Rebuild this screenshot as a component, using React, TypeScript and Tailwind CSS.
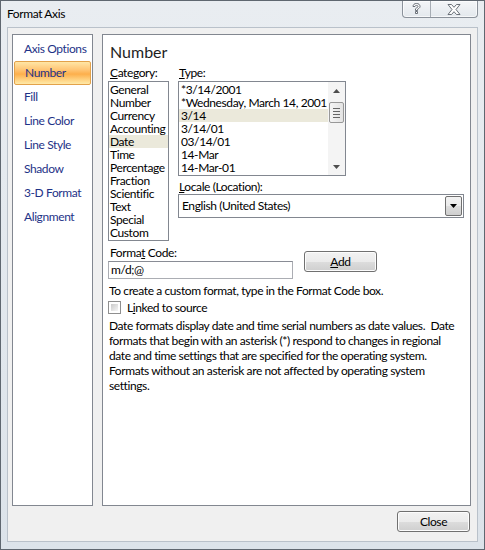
import type { ReactNode } from 'react';

const font = { fontFamily: 'Lato, "Noto Sans", sans-serif' };

const navItems = ['Axis Options', 'Number', 'Fill', 'Line Color', 'Line Style', 'Shadow', '3-D Format', 'Alignment'];
const categories = ['General', 'Number', 'Currency', 'Accounting', 'Date', 'Time', 'Percentage', 'Fraction', 'Scientific', 'Text', 'Special', 'Custom'];
const types = ['*3/14/2001', '*Wednesday, March 14, 2001', '3/14', '3/14/01', '03/14/01', '14-Mar', '14-Mar-01'];

function Btn({ children, className = '' }: { children: ReactNode; className?: string }) {
  return (
    <button
      className={`flex items-center justify-center rounded-[3px] border border-[#707070] bg-[linear-gradient(#f2f2f2_0%,#ebebeb_50%,#dddddd_51%,#cfcfcf_100%)] text-[12px] leading-none text-black shadow-[inset_0_0_0_1px_#fcfcfc] ${className}`}
    >
      {children}
    </button>
  );
}

function Arrow({ up }: { up?: boolean }) {
  return (
    <svg width="7" height="4" viewBox="0 0 7 4">
      <path d={up ? 'M0 4 L3.5 0 L7 4 Z' : 'M0 0 L7 0 L3.5 4 Z'} fill="#4d4d4d" />
    </svg>
  );
}

export default function App() {
  return (
    <div
      className="flex h-[550px] w-[485px] flex-col overflow-hidden border border-[#5f6770] bg-[linear-gradient(#e9edf1,#dce3ea)] tracking-[-0.4px] text-black"
      style={font}
    >
      {/* Title bar */}
      <div className="flex h-[26px] shrink-0 items-start justify-between pl-[6px] pr-[6px]">
        <span className="mt-[5px] text-[12px] leading-[16px]">Format Axis</span>
        <div className="flex h-[17px] rounded-b-[4px] border-x border-b border-[#8b929b] bg-[linear-gradient(#f4f6f8,#e3e8ed)] shadow-[inset_0_0_0_1px_#ffffffaa]">
          <div className="flex w-[28px] items-center justify-center border-r border-[#a7adb4]">
            <svg width="9" height="12" viewBox="0 0 9 12">
              <path
                d="M1 3.5 C1 1.5 2.5 0.5 4.5 0.5 C6.5 0.5 8 1.5 8 3.5 C8 5 6.5 5.5 5.5 6.3 L5.5 7.5 L3.5 7.5 L3.5 5.8 C4.2 4.8 6 4.5 6 3.5 C6 2.7 5.3 2.4 4.5 2.4 C3.6 2.4 3 2.8 3 3.5 Z M3.5 8.5 L5.5 8.5 L5.5 10.5 L3.5 10.5 Z"
                fill="#ffffff"
                stroke="#5c636b"
                strokeWidth="0.9"
              />
            </svg>
          </div>
          <div className="flex w-[46px] items-center justify-center">
            <svg width="14" height="11" viewBox="0 0 14 11">
              <path
                d="M1 0.5 L4.5 0.5 L7 3.3 L9.5 0.5 L13 0.5 L9 5.5 L13 10.5 L9.5 10.5 L7 7.7 L4.5 10.5 L1 10.5 L5 5.5 Z"
                fill="#ffffff"
                stroke="#5c636b"
                strokeWidth="0.9"
              />
            </svg>
          </div>
        </div>
      </div>

      {/* Client area */}
      <div className="mx-[6px] flex h-[515px] flex-col border border-[#b9c1ca] bg-[#f0f0f0] pl-[4px] pr-[6px] pt-[6px]">
        <div className="flex h-[472px] gap-[9px]">
          {/* Left nav */}
          <nav className="flex w-[81px] flex-col border border-[#828790] bg-white pt-[2px]">
            {navItems.map((item) => (
              <div
                key={item}
                className={`mx-[1px] flex h-[24px] items-center whitespace-nowrap pl-[10px] text-[12px] text-[#1e3287] ${
                  item === 'Number'
                    ? 'rounded-[2px] border border-[#e3a24a] bg-[linear-gradient(#ffe6a6_0%,#ffc575_35%,#fdaf4c_55%,#ffd88b_85%,#ffe9a8_100%)] pl-[9px] text-[#1a2a6c]'
                    : ''
                }`}
              >
                {item}
              </div>
            ))}
          </nav>

          {/* Right panel */}
          <section className="flex w-[369px] flex-col border border-[#828790] bg-white pl-[5px] pt-[7px] text-[12px]">
            <h2 className="pl-[2px] text-[16px] leading-[20px] tracking-normal text-[#1e1e1e]">Number</h2>

            <div className="mt-[3px] flex gap-[9px]">
              {/* Category */}
              <div className="flex w-[61px] flex-col">
                <label className="pl-[2px] leading-[15px]">
                  <span className="underline">C</span>ategory:
                </label>
                <div className="mt-[1px] flex h-[160px] flex-col border border-[#828790] bg-white pt-[1px]">
                  {categories.map((c) => (
                    <div
                      key={c}
                      className={`h-[13px] whitespace-nowrap pl-[1px] leading-[13px] ${c === 'Date' ? 'bg-[#ebe9db]' : ''}`}
                    >
                      {c}
                    </div>
                  ))}
                </div>
              </div>

              {/* Type and locale */}
              <div className="flex w-[286px] flex-col">
                <label className="pl-[1px] leading-[15px]">
                  <span className="underline">T</span>ype:
                </label>
                <div className="mt-[1px] flex h-[95px] w-[168px] border border-[#828790] bg-white">
                  <div className="flex flex-1 flex-col pt-[1px]">
                    {types.map((t) => (
                      <div
                        key={t}
                        className={`h-[13px] whitespace-nowrap pl-[2px] leading-[13px] ${t === '3/14' ? 'bg-[#ebe9db]' : ''}`}
                      >
                        {t}
                      </div>
                    ))}
                  </div>
                  <div className="flex w-[17px] flex-col items-center bg-[#f4f4f4]">
                    <div className="flex h-[17px] items-center justify-center">
                      <Arrow up />
                    </div>
                    <div className="mt-[3px] flex h-[21px] w-[15px] flex-col items-center justify-center gap-[2px] rounded-[2px] border border-[#989898] bg-[linear-gradient(90deg,#f5f5f5,#e3e3e3)]">
                      <div className="h-px w-[7px] bg-[#666]" />
                      <div className="h-px w-[7px] bg-[#666]" />
                      <div className="h-px w-[7px] bg-[#666]" />
                      <div className="h-px w-[7px] bg-[#666]" />
                    </div>
                    <div className="flex-1" />
                    <div className="flex h-[17px] items-center justify-center">
                      <Arrow />
                    </div>
                  </div>
                </div>

                <label className="mt-[3px] pl-[1px] leading-[15px]">
                  <span className="underline">L</span>ocale (Location):
                </label>
                <div className="flex h-[24px] items-center border border-[#828790] bg-white">
                  <span className="flex-1 pl-[3px]">English (United States)</span>
                  <div className="mr-[1px] flex h-[20px] w-[17px] items-center justify-center rounded-[2px] border border-[#707070] bg-[linear-gradient(#f2f2f2_0%,#ebebeb_50%,#dddddd_51%,#cfcfcf_100%)]">
                    <svg width="7" height="4" viewBox="0 0 7 4">
                      <path d="M0 0 L7 0 L3.5 4 Z" fill="#000" />
                    </svg>
                  </div>
                </div>
              </div>
            </div>

            {/* Format code */}
            <div className="mt-[4px] flex items-start">
              <div className="flex w-[185px] flex-col">
                <label className="pl-[2px] leading-[15px]">
                  Forma<span className="underline">t</span> Code:
                </label>
                <div className="mt-[1px] flex h-[18px] items-center border border-[#abadb3] border-t-[#898c95] bg-white pl-[2px]">
                  m/d;@
                </div>
              </div>
              <Btn className="ml-[11px] mt-[6px] h-[21px] w-[73px]">
                <span className="underline">A</span>dd
              </Btn>
            </div>

            <p className="mt-[4px] pl-[1px] leading-[15px]">To create a custom format, type in the Format Code box.</p>

            <div className="mt-[2px] flex items-center">
              <div className="h-[13px] w-[13px] border border-[#8f8f8f] bg-white p-[2px]">
                <div className="h-full w-full bg-[linear-gradient(135deg,#cbcbcb,#f6f6f6)]" />
              </div>
              <span className="ml-[6px] leading-[15px]">
                L<span className="underline">i</span>nked to source
              </span>
            </div>

            <p className="mt-[3px] whitespace-nowrap pl-[1px] leading-[15px]">
              Date formats display date and time serial numbers as date values.&nbsp; Date
              <br />
              formats that begin with an asterisk (*) respond to changes in regional
              <br />
              date and time settings that are specified for the operating system.
              <br />
              Formats without an asterisk are not affected by operating system
              <br />
              settings.
            </p>
          </section>
        </div>

        <div className="flex justify-end pr-[1px] pt-[5px]">
          <Btn className="h-[21px] w-[73px]">Close</Btn>
        </div>
      </div>
    </div>
  );
}
